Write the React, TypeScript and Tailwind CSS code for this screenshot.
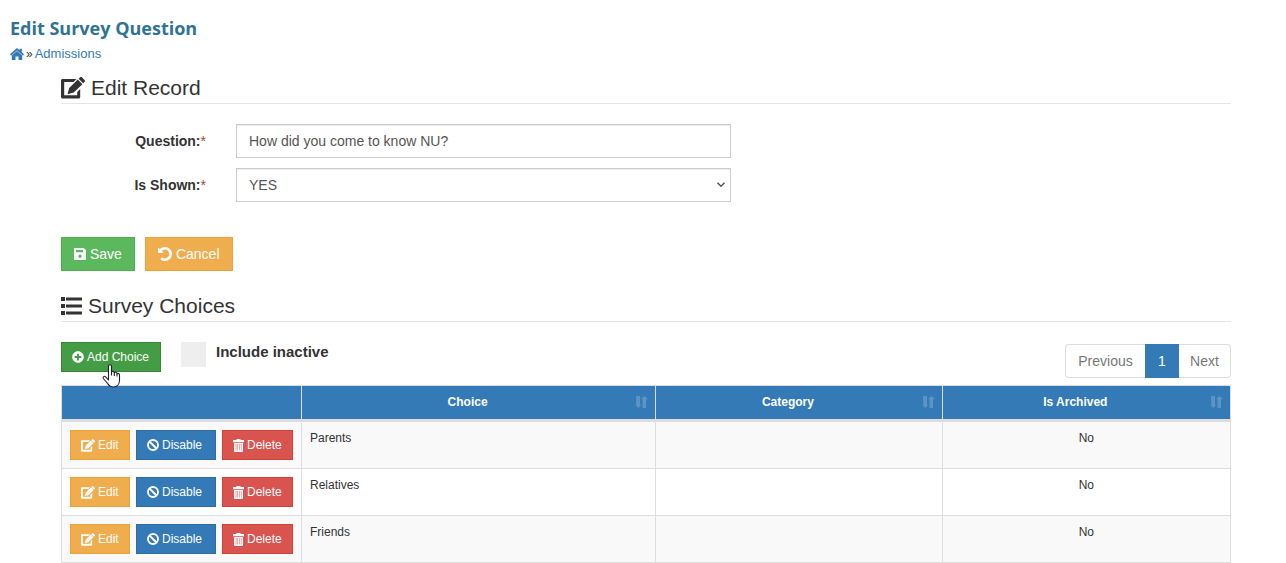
import { ReactNode } from "react";
import { FaPlusCircle } from "react-icons/fa";

const choices = [
  { name: "Parents", category: "", archived: "No" },
  { name: "Relatives", category: "", archived: "No" },
  { name: "Friends", category: "", archived: "No" },
];

function Icon({ box, className, children }: { box: string; className: string; children: ReactNode }) {
  return (
    <svg viewBox={box} className={className} fill="currentColor" aria-hidden="true">
      {children}
    </svg>
  );
}

function EditIcon({ className }: { className: string }) {
  return (
    <Icon box="0 0 24 22" className={className}>
      <path d="M1.500 2H15.500L12.500 5H3.200V18.200h13V15l3-3V20c0 .8-.6 1.500-1.500 1.500H1.500C.7 21.500 0 20.800 0 20V3.500C0 2.700.7 2 1.500 2z" />
      <path d="M6.500 17.200 8.200 11 16.800 2.600l4.600 4.600-8.700 8.400zM17.600 1.800 19 .5c.6-.6 1.500-.6 2.100 0l2.400 2.400c.6.6.6 1.500 0 2.100l-1.300 1.300z" />
    </Icon>
  );
}

function HomeIcon() {
  return (
    <Icon box="0 0 14 12" className="h-3 w-3.5">
      <path d="M7 0l2.600 2.300V.7h2.200v3.500L14 6.200l-1 1.500L7 2.400 1 7.700 0 6.200z" />
      <path d="M7 3 12.200 7.600V12H8.500V8.500h-3V12H1.800V7.600z" />
    </Icon>
  );
}

function ListIcon() {
  return (
    <Icon box="0 0 21 18" className="h-[18px] w-[21px]">
      <path d="M0 0h4v4H0zM0 7h4v4H0zM0 14h4v4H0zM5 .5h16v3H5zM5 7.500h16v3H5zM5 14.500h16v3H5z" />
    </Icon>
  );
}

function SaveIcon() {
  return (
    <Icon box="0 0 12 12" className="size-3">
      <path
        fillRule="evenodd"
        d="M1 0h8.700L12 2.300V11c0 .6-.4 1-1 1H1c-.6 0-1-.4-1-1V1c0-.6.4-1 1-1zM2 2v2.300h7V2zM6 6.500a1.700 1.700 0 1 0 0 3.400 1.700 1.700 0 0 0 0-3.400z"
      />
    </Icon>
  );
}

function UndoIcon() {
  return (
    <Icon box="0 0 14 14" className="size-3.5">
      <path d="M0 .5 1.800 2.100C3.100.8 5 0 7 0a7 7 0 1 1-4.700 12.200l2-2A4.200 4.200 0 1 0 3.900 4.100L5.600 6H0z" />
    </Icon>
  );
}

function BanIcon() {
  return (
    <svg viewBox="0 0 12 12" className="size-3" fill="none" stroke="currentColor" strokeWidth="1.900" aria-hidden="true">
      <circle cx="6" cy="6" r="5" />
      <path d="M2.500 2.500l7 7" />
    </svg>
  );
}

function TrashIcon() {
  return (
    <Icon box="0 0 11 13" className="h-[13px] w-[11px]">
      <path
        fillRule="evenodd"
        d="M3.500 0h4v1H11v2.300H0V1h3.500zM1 3.900h9V12c0 .6-.4 1-1 1H2c-.6 0-1-.4-1-1zM2.800 5v6.500h.5V5zM4.500 5v6.500H5V5zM6.200 5v6.500h.5V5zM7.900 5v6.500h.5V5z"
      />
    </Icon>
  );
}

function SortIcon() {
  return (
    <svg viewBox="0 0 13 12" className="absolute top-2.5 right-[7px] h-3 w-[13px] opacity-20" fill="#fff" aria-hidden="true">
      <path d="M1.200 0H5v8.800h1.500L3.300 12 0 8.800h1.200zM7.500 12H11V3.200h2L9.500 0 6 3.200h1.500z" />
    </svg>
  );
}

function HandCursor() {
  return (
    <svg viewBox="0 0 20 24" className="pointer-events-none absolute top-[22px] left-[41px] z-10 h-6 w-5" aria-hidden="true">
      <path
        d="M6.500 13.500V2.300C6.500.2 9.500.2 9.500 2.300V8c.6-1.200 2.700-.8 2.800.8.700-1 2.600-.6 2.700 1 .8-.8 2.500-.3 2.500 1.300V16c0 4-2.200 7-6 7-3 0-4.700-1.200-6.200-4L1.300 14.500c-.8-1.600 1-2.900 2.300-1.700L6.500 16z"
        fill="#fff"
        stroke="#1d1d2b"
        strokeWidth="1.1"
        strokeLinejoin="round"
      />
      <path d="M9.500 7.500V11.500M12.300 9v3M15 10v2.500" fill="none" stroke="#1d1d2b" strokeWidth="1.1" />
    </svg>
  );
}

function SectionTitle({ icon, children }: { icon: ReactNode; children: ReactNode }) {
  return (
    <h2 className="flex h-8 items-center gap-1.5 border-b border-[#e5e5e5] text-[21px] leading-8">
      {icon}
      {children}
    </h2>
  );
}

function FieldLabel({ htmlFor, children }: { htmlFor: string; children: ReactNode }) {
  return (
    <label htmlFor={htmlFor} className="text-right font-bold">
      {children}
      <span className="font-normal text-[#a94442]">*</span>
    </label>
  );
}

const small = "flex h-[30px] items-center gap-[3px] border pl-2.5 text-[12px] text-white";
const large = "flex h-[34px] items-center gap-1 border px-3 text-[14px] text-white";
const field = "block h-[34px] w-full border border-[#ccc] bg-white px-3 text-[#555] shadow-[inset_0_1px_1px_rgba(0,0,0,0.075)]";
const headCell = "relative border border-[#ddd] border-b-[3px] bg-[#337ab7] py-2 pl-2 align-top leading-[17px] font-bold";
const bodyCell = "border border-[#ddd] px-2 pt-2 align-top leading-[17px]";

export default function App() {
  return (
    <main className="min-h-screen bg-white px-2.5 pt-4 font-['Liberation_Sans',Arial,sans-serif] text-[12px] text-[#333]">
      <h1 className="font-['Open_Sans','Noto_Sans',sans-serif] text-[18px] leading-6 font-bold text-[#2f7394]">
        Edit Survey Question
      </h1>
      <nav aria-label="Breadcrumb" className="mt-1.5 flex h-4 items-center gap-0.5">
        <a href="#home" aria-label="Home" className="text-[#337ab7]">
          <HomeIcon />
        </a>
        <span>»</span>
        <a href="#admissions" className="text-[13px] text-[#337ab7]">
          Admissions
        </a>
      </nav>

      <div className="mr-[45px] ml-[51px]">
        <section className="pt-2.5">
          <SectionTitle icon={<EditIcon className="h-[22px] w-6" />}>Edit Record</SectionTitle>
          <form onSubmit={(e) => e.preventDefault()} className="pt-5 text-[14px]">
            <div className="grid max-w-[670px] grid-cols-[145px_1fr] items-center gap-x-[30px] gap-y-2.5">
              <FieldLabel htmlFor="question">Question:</FieldLabel>
              <input id="question" defaultValue="How did you come to know NU?" className={field} />
              <FieldLabel htmlFor="shown">Is Shown:</FieldLabel>
              <div className="relative">
                <select id="shown" defaultValue="YES" className={`${field} appearance-none`}>
                  <option>YES</option>
                  <option>NO</option>
                </select>
                <svg viewBox="0 0 10 6" className="pointer-events-none absolute top-3.5 right-[5px] h-1.5 w-2.5" aria-hidden="true">
                  <path d="M1.500 .8 5 4.300 8.500 .8" fill="none" stroke="#555" strokeWidth="1.5" />
                </svg>
              </div>
            </div>
            <div className="mt-[35px] flex gap-2.5">
              <button type="submit" className={`${large} border-[#4cae4c] bg-[#5cb85c]`}>
                <SaveIcon />
                Save
              </button>
              <button type="button" className={`${large} border-[#eea236] bg-[#f0ad4e]`}>
                <UndoIcon />
                Cancel
              </button>
            </div>
          </form>
        </section>

        <section className="pt-[19px]">
          <SectionTitle icon={<ListIcon />}>Survey Choices</SectionTitle>
          <div className="flex items-start pt-5">
            <div className="relative">
              <button type="button" className={`${small} w-[100px] border-[#398439] bg-[#449d44]`}>
                <FaPlusCircle className="size-3" />
                Add Choice
              </button>
              <HandCursor />
            </div>
            <label className="ml-5 flex gap-2.5 text-[15px] leading-5 font-bold">
              <input type="checkbox" className="size-[25px] appearance-none bg-[#eee] checked:bg-[#337ab7]" />
              Include inactive
            </label>
            <nav aria-label="Pagination" className="mt-0.5 ml-auto flex h-[34px] text-[14px]">
              <button type="button" className="w-20 rounded-l border border-r-0 border-[#ddd] text-[#777]">
                Previous
              </button>
              <button type="button" aria-current="page" className="w-[34px] bg-[#337ab7] text-white">
                1
              </button>
              <button type="button" className="w-[52px] rounded-r border border-l-0 border-[#ddd] text-[#777]">
                Next
              </button>
            </nav>
          </div>

          <table className="mt-[7px] w-full table-fixed border-collapse">
            <colgroup>
              <col className="w-[240px]" />
              <col className="w-[30.3%]" />
              <col className="w-[24.5%]" />
              <col />
            </colgroup>
            <thead className="text-white">
              <tr className="h-[35px]">
                <th className={headCell} aria-label="Actions" />
                {["Choice", "Category", "Is Archived"].map((title) => (
                  <th key={title} className={`${headCell} pr-[30px]`}>
                    {title}
                    <SortIcon />
                  </th>
                ))}
              </tr>
            </thead>
            <tbody>
              {choices.map((choice) => (
                <tr key={choice.name} className="h-[47px] first:h-12 odd:bg-[#f9f9f9]">
                  <td className={bodyCell}>
                    <div className="flex gap-1.5">
                      <button type="button" className={`${small} w-[60px] border-[#eea236] bg-[#f0ad4e]`}>
                        <EditIcon className="h-[13px] w-3.5" />
                        Edit
                      </button>
                      <button type="button" className={`${small} w-20 border-[#2e6da4] bg-[#337ab7]`}>
                        <BanIcon />
                        Disable
                      </button>
                      <button type="button" className={`${small} w-[71px] border-[#d43f3a] bg-[#d9534f]`}>
                        <TrashIcon />
                        Delete
                      </button>
                    </div>
                  </td>
                  <td className={bodyCell}>{choice.name}</td>
                  <td className={bodyCell}>{choice.category}</td>
                  <td className={`${bodyCell} text-center`}>{choice.archived}</td>
                </tr>
              ))}
            </tbody>
          </table>
        </section>
      </div>
    </main>
  );
}
